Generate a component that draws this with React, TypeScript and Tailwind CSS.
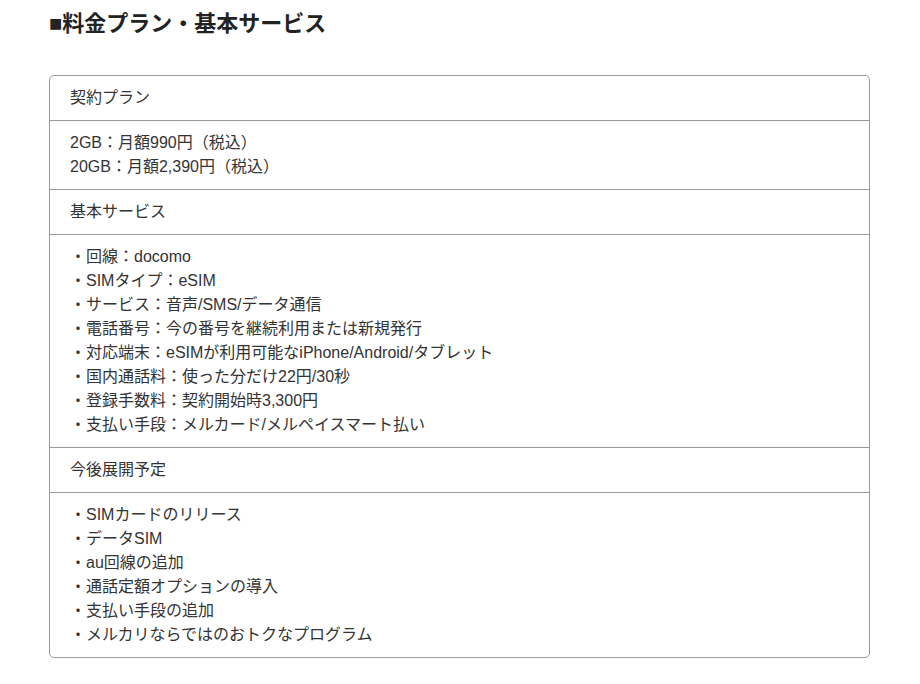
import React from "react";

const font = {
  fontFamily: '"Liberation Sans", "Noto Sans CJK JP", sans-serif',
};

const sections: { head: string; lines: string[] }[] = [
  {
    head: "契約プラン",
    lines: ["2GB：月額990円（税込）", "20GB：月額2,390円（税込）"],
  },
  {
    head: "基本サービス",
    lines: [
      "・回線：docomo",
      "・SIMタイプ：eSIM",
      "・サービス：音声/SMS/データ通信",
      "・電話番号：今の番号を継続利用または新規発行",
      "・対応端末：eSIMが利用可能なiPhone/Android/タブレット",
      "・国内通話料：使った分だけ22円/30秒",
      "・登録手数料：契約開始時3,300円",
      "・支払い手段：メルカード/メルペイスマート払い",
    ],
  },
  {
    head: "今後展開予定",
    lines: [
      "・SIMカードのリリース",
      "・データSIM",
      "・au回線の追加",
      "・通話定額オプションの導入",
      "・支払い手段の追加",
      "・メルカリならではのおトクなプログラム",
    ],
  },
];

export default function App() {
  return (
    <div className="min-h-[684px] bg-white text-[#333] px-[49px] pt-[9px]" style={font}>
      <h2 className="text-[22px] leading-[30px] font-bold text-[#222]">
        ■料金プラン・基本サービス
      </h2>
      <div className="mt-[36px] w-[821px] border border-[#9a9a9a] rounded-[5px] overflow-hidden">
        {sections.map((s, i) => (
          <div key={s.head}>
            <div
              className={`px-[20px] py-[10px] text-[16px] leading-[24px] ${
                i > 0 ? "border-t border-[#9a9a9a]" : ""
              }`}
            >
              {s.head}
            </div>
            <div className="border-t border-[#9a9a9a] px-[20px] py-[10px] text-[16px] leading-[24px]">
              {s.lines.map((l) => (
                <div key={l}>{l}</div>
              ))}
            </div>
          </div>
        ))}
      </div>
    </div>
  );
}
